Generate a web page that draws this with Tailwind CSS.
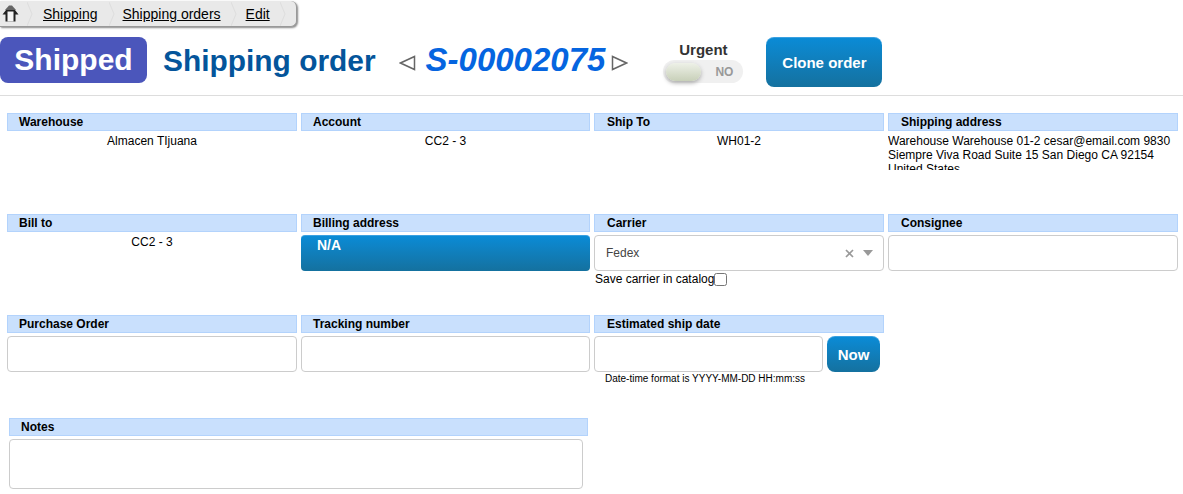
<!DOCTYPE html>
<html>
<head>
<meta charset="utf-8">
<script src="https://cdn.jsdelivr.net/npm/@tailwindcss/browser@4"></script>
</head>
<body class="bg-white text-black font-['Liberation_Sans',Arial,sans-serif] text-[12px] leading-[14px] w-[1183px] h-[494px] overflow-hidden">
  <nav class="flex items-center w-[297px] h-[26px] mt-px bg-[#e9e9e9] rounded-r-[6px] border-r border-b border-[#999] shadow-[1px_1px_2px_#888] text-[14px]">
    <svg class="ml-[2px] w-[17px] h-[17px]" viewBox="0 0 17 17"><path d="M7 .5H10L14 5H3Z" fill="#666"/><path d="M.5 9.5 4 5H13L16.5 9.5H13.5V16.5H3.5V9.5Z" fill="#222"/><path d="M5.5 6.5H11.5V16.5H5.5Z" fill="#f4f4f4"/></svg>
    <svg class="ml-[8px] w-[6px] h-[24px]" viewBox="0 0 6 24"><path d="M0 0 5 12 0 24" fill="none" stroke="#ddd"/></svg>
    <a class="ml-[10px] underline" href="#">Shipping</a>
    <svg class="ml-[11px] w-[6px] h-[24px]" viewBox="0 0 6 24"><path d="M0 0 5 12 0 24" fill="none" stroke="#ddd"/></svg>
    <a class="ml-[8px] underline" href="#">Shipping orders</a>
    <svg class="ml-[10px] w-[6px] h-[24px]" viewBox="0 0 6 24"><path d="M0 0 5 12 0 24" fill="none" stroke="#ddd"/></svg>
    <a class="ml-[9px] underline" href="#">Edit</a>
    <svg class="ml-[10px] w-[6px] h-[24px]" viewBox="0 0 6 24"><path d="M0 0 5 12 0 24" fill="none" stroke="#ddd"/></svg>
  </nav>

  <header class="flex items-start h-[59px] mt-[10px] border-b border-[#ddd]">
    <div class="w-[147px] h-[46px] flex items-center justify-center rounded-[8px] bg-[#4b56bb] text-white font-bold text-[30px]">Shipped</div>
    <h1 class="ml-[16px] mt-[7px] text-[#04559b] font-bold text-[29.9px] leading-[33px]">Shipping order</h1>
    <svg class="ml-[23px] mt-[18px] w-[17px] h-[16px]" viewBox="0 0 17 16"><path d="M15.5 1.5V14.5L1.5 8Z" fill="none" stroke="#666" stroke-width="1.5"/></svg>
    <div class="ml-[10px] mt-[4px] text-[#0565e0] font-bold italic text-[33px] leading-[38px]">S-00002075</div>
    <svg class="ml-[6px] mt-[18px] w-[17px] h-[16px]" viewBox="0 0 17 16"><path d="M1.5 1.5V14.5L15.5 8Z" fill="none" stroke="#666" stroke-width="1.5"/></svg>
    <div class="ml-[35px] w-[80px] flex flex-col items-center mt-[4px]">
      <div class="text-[#333] font-bold text-[15px] leading-[18px]">Urgent</div>
      <div class="relative w-[80px] h-[23px] mt-px rounded-full bg-[#f0f0f0] flex items-center justify-end pr-[10px]">
        <span class="absolute left-[3px] top-[3px] w-[35px] h-[18px] rounded-full bg-gradient-to-b from-[#eef1e8] to-[#c8d0b9] shadow-[0_2px_4px_#aaa]"></span>
        <span class="text-[#999] font-bold text-[12px]">NO</span>
      </div>
    </div>
    <button class="ml-[23px] w-[116px] h-[50px] rounded-[8px] border-t border-[#3aa0e0] bg-gradient-to-b from-[#0a8bd6] to-[#14719f] text-white font-bold text-[15px]">Clone order</button>
  </header>

  <main class="grid grid-cols-[294px_293px_294px_295px] pl-[7px] pt-[17px]">
    <section class="h-[101px] pr-[4px]">
      <h2 class="h-[18px] pl-[11px] bg-[#c9e0fd] border border-[#b3d3fc] font-bold leading-[16px]">Warehouse</h2>
      <p class="mt-[3px] text-center">Almacen TIjuana</p>
    </section>
    <section class="h-[101px] pr-[4px]">
      <h2 class="h-[18px] pl-[11px] bg-[#c9e0fd] border border-[#b3d3fc] font-bold leading-[16px]">Account</h2>
      <p class="mt-[3px] text-center">CC2 - 3</p>
    </section>
    <section class="h-[101px] pr-[4px]">
      <h2 class="h-[18px] pl-[12px] bg-[#c9e0fd] border border-[#b3d3fc] font-bold leading-[16px]">Ship To</h2>
      <p class="mt-[3px] text-center">WH01-2</p>
    </section>
    <section class="h-[101px] pr-[5px]">
      <h2 class="h-[18px] pl-[12px] bg-[#c9e0fd] border border-[#b3d3fc] font-bold leading-[16px]">Shipping address</h2>
      <p class="mt-[3px] h-[36px] overflow-hidden">Warehouse Warehouse 01-2 cesar@email.com 9830 Siempre Viva Road Suite 15 San Diego CA 92154 United States</p>
    </section>

    <section class="h-[101px] pr-[4px]">
      <h2 class="h-[18px] pl-[11px] bg-[#c9e0fd] border border-[#b3d3fc] font-bold leading-[16px]">Bill to</h2>
      <p class="mt-[3px] text-center">CC2 - 3</p>
    </section>
    <section class="h-[101px] pr-[4px]">
      <h2 class="h-[18px] pl-[11px] bg-[#c9e0fd] border border-[#b3d3fc] font-bold leading-[16px]">Billing address</h2>
      <div class="mt-[3px] h-[36px] pl-[16px] pt-[2px] rounded-[4px] border-t border-[#3aa0e0] bg-gradient-to-b from-[#0a8bd6] to-[#14719f] text-white font-bold text-[14px]">N/A</div>
    </section>
    <section class="h-[101px] pr-[4px]">
      <h2 class="h-[18px] pl-[12px] bg-[#c9e0fd] border border-[#b3d3fc] font-bold leading-[16px]">Carrier</h2>
      <div class="mt-[3px] h-[36px] pl-[11px] pr-[10px] flex items-center rounded-[4px] border border-[#ccc] text-[#444]">
        <span class="flex-1">Fedex</span>
        <svg class="w-[9px] h-[9px]" viewBox="0 0 9 9"><path d="M1 1 8 8M8 1 1 8" stroke="#999" stroke-width="1.7"/></svg>
        <svg class="ml-[9px] w-[10px] h-[6px]" viewBox="0 0 10 6"><path d="M0 0H10L5 6Z" fill="#999"/></svg>
      </div>
      <label class="mt-px pl-px flex items-center">Save carrier in catalog<span class="w-[13px] h-[13px] rounded-[2.5px] border border-[#767676] bg-white"></span></label>
    </section>
    <section class="h-[101px] pr-[5px]">
      <h2 class="h-[18px] pl-[12px] bg-[#c9e0fd] border border-[#b3d3fc] font-bold leading-[16px]">Consignee</h2>
      <div class="mt-[3px] h-[36px] rounded-[4px] border border-[#ccc]"></div>
    </section>

    <section class="h-[103px] pr-[4px]">
      <h2 class="h-[18px] pl-[11px] bg-[#c9e0fd] border border-[#b3d3fc] font-bold leading-[16px]">Purchase Order</h2>
      <div class="mt-[3px] h-[36px] rounded-[4px] border border-[#ccc]"></div>
    </section>
    <section class="h-[103px] pr-[4px]">
      <h2 class="h-[18px] pl-[11px] bg-[#c9e0fd] border border-[#b3d3fc] font-bold leading-[16px]">Tracking number</h2>
      <div class="mt-[3px] h-[36px] rounded-[4px] border border-[#ccc]"></div>
    </section>
    <section class="h-[103px] pr-[4px]">
      <h2 class="h-[18px] pl-[12px] bg-[#c9e0fd] border border-[#b3d3fc] font-bold leading-[16px]">Estimated ship date</h2>
      <div class="mt-[3px] flex">
        <div class="w-[229px] h-[36px] rounded-[4px] border border-[#ccc]"></div>
        <button class="ml-[4px] w-[53px] h-[36px] rounded-[8px] border-t border-[#3aa0e0] bg-gradient-to-b from-[#0a8bd6] to-[#14719f] text-white font-bold text-[15px]">Now</button>
      </div>
      <p class="pl-[11px] mt-px text-[10px] leading-[11px]">Date-time format is YYYY-MM-DD HH:mm:ss</p>
    </section>
    <section class="h-[103px]"></section>

    <section class="col-span-2 pl-[2px] pr-[6px]">
      <h2 class="h-[18px] pl-[11px] bg-[#c9e0fd] border border-[#b3d3fc] font-bold leading-[16px]">Notes</h2>
      <div class="mt-[3px] w-[574px] h-[50px] rounded-[4px] border border-[#ccc]"></div>
    </section>
  </main>
</body>
</html>
